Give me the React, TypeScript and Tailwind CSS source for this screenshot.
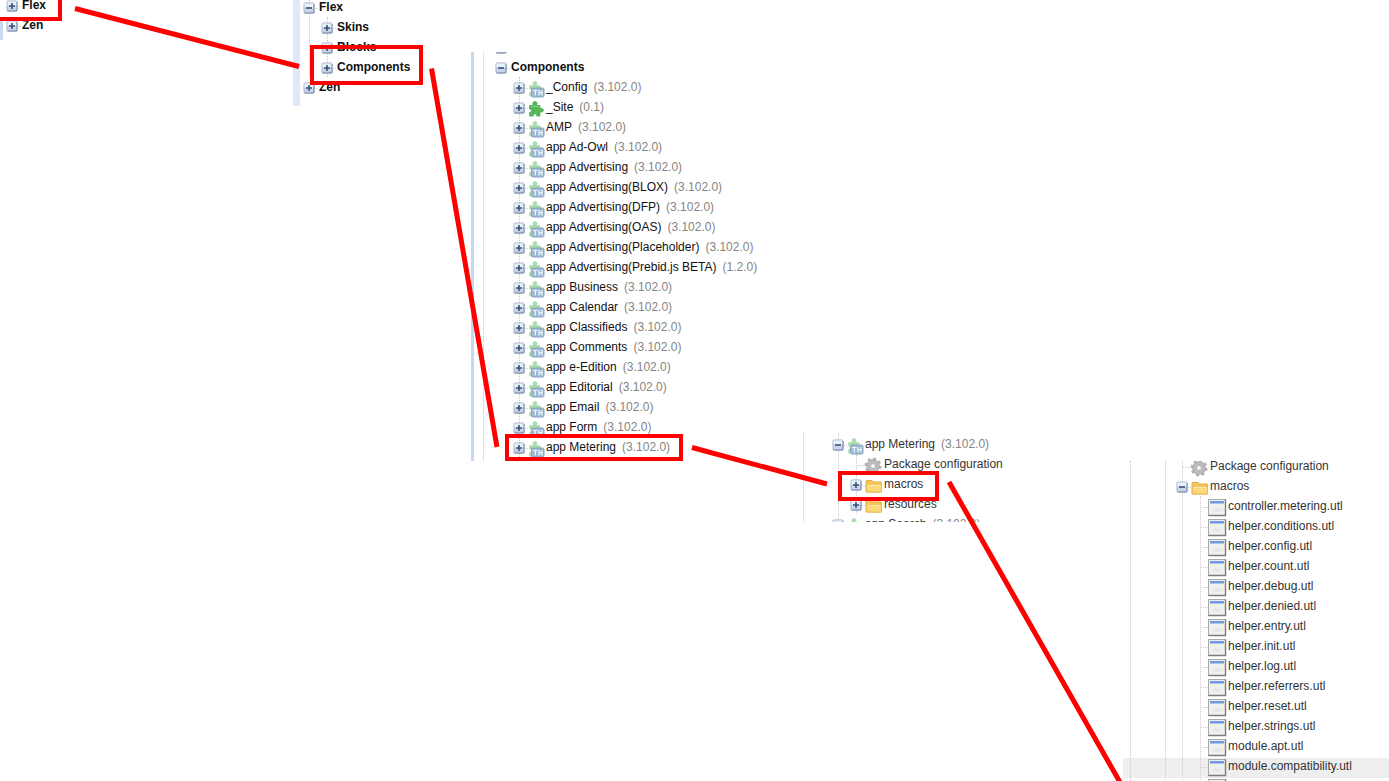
import React from "react";
import type { ReactNode } from "react";

type Kind = "th" | "puzzle" | "gear" | "folder" | "file" | "none";

function Expander({ open = false, label }: { open?: boolean; label: string }) {
  return (
    <button type="button" aria-expanded={open} aria-label={`Toggle ${label}`} className="z-10 mt-[5px] h-3 w-3 shrink-0">
      <svg viewBox="0 0 12 12" className="block h-3 w-3">
        <rect x="1" y="1" width="10" height="10" rx="1" fill="#c9d6e7" stroke="#a3b2cb" />
        <path d="M1.500 1.500h9v4h-9z" fill="#eaf0f8" />
        <path d="M1.500 11h9.500V2" stroke="#7d8fb0" fill="none" />
        <path d={open ? "M3 6h6" : "M3 6h6M6 3v6"} stroke="#3a4f78" strokeWidth="1.6" />
      </svg>
    </button>
  );
}

const PUZZLE =
  "M1.500 4.500H5.500C4.200 2.300 5 .6 7 .6s2.800 1.700 1.500 3.900H12V8c1.800-1.100 3.400-.6 3.400 1.200s-1.600 2.300-3.400 1.200V15H8.600c.5-1.500-.3-2.200-1.600-2.200s-2.100.7-1.600 2.200H1.500v-3.400c1.300-.2 1.900-.9 1.900-1.900S2.800 8 1.500 7.800z";

function Icon({ kind }: { kind: Kind }) {
  if (kind === "none") return null;
  if (kind === "th")
    return (
      <svg viewBox="0 0 17 17" className="mt-1 h-[17px] w-[17px] shrink-0" aria-hidden="true">
        <path d={PUZZLE} fill="#a8dcaa" stroke="#b5e0b6" strokeWidth=".8" />
        <rect x="3.500" y="7" width="12.500" height="9" rx="1.500" fill="#9db9d4" stroke="#86a5c4" />
        <path d="M5 9.500h4.500M7.300 9.500v5M11 9v5.500M14 9v5.500M11 11.700h3" stroke="#f0f6fb" strokeWidth="1.200" fill="none" />
      </svg>
    );
  if (kind === "puzzle")
    return (
      <svg viewBox="0 0 17 17" className="mt-1 h-[17px] w-[17px] shrink-0" aria-hidden="true">
        <path d={PUZZLE} fill="#56b858" stroke="#4bab50" strokeWidth=".8" />
        <path d="M2.500 5.500h9" stroke="#7fd07f" />
      </svg>
    );
  if (kind === "gear")
    return (
      <svg viewBox="0 0 18 18" className="mt-[3px] h-[18px] w-[18px] shrink-0" aria-hidden="true">
        <circle cx="9" cy="9" r="7.300" fill="none" stroke="#b0b0b0" strokeWidth="2.400" strokeDasharray="2.900 2.833" />
        <circle cx="9" cy="9" r="4.800" fill="none" stroke="#bcbcbc" strokeWidth="4" />
        <circle cx="9" cy="9" r="6.300" fill="none" stroke="#a5a5a5" strokeWidth=".6" />
        <circle cx="9" cy="9" r="2.500" fill="#f8f8f8" stroke="#999" strokeWidth=".8" />
      </svg>
    );
  if (kind === "folder")
    return (
      <svg viewBox="0 0 18 16" className="mt-1 h-4 w-[18px] shrink-0" aria-hidden="true">
        <path d="M1 3.500q0-1 1-1h5l1.500 1.500H15.500q1 0 1 1v9H1z" fill="#f3c65a" stroke="#e3ab3c" />
        <path d="M1.500 6.500h15v6.500q0 1-1 1H2.500q-1 0-1-1z" fill="#fcd97b" stroke="#ecbb53" />
        <path d="M2.500 7.300h13" stroke="#ffedb0" />
      </svg>
    );
  return (
    <svg viewBox="0 0 19 18" className="mt-[3px] h-[18px] w-[19px] shrink-0" aria-hidden="true">
      <rect x="0.500" y="0.500" width="17" height="16" fill="#f0f0f0" stroke="#a9a9a9" />
      <path d="M17.500 .5v16H.5" fill="none" stroke="#7c7c7c" strokeWidth="1.400" />
      <path d="M2 2h14v2.500H2z" fill="#6e98e2" />
      <path d="M5 12l2-3 3 1 2-2 1 3-3 2z" fill="#e4e4e4" />
    </svg>
  );
}

function Row({
  label,
  version,
  kind = "none",
  open,
  leaf = false,
  bold = false,
}: {
  label: string;
  version?: string;
  kind?: Kind;
  open?: boolean;
  leaf?: boolean;
  bold?: boolean;
}) {
  return (
    <div className="flex h-5 whitespace-nowrap leading-5">
      {leaf ? (
        <span className="mt-[11px] w-2 shrink-0 border-t border-dotted border-[#d0d0d0]" />
      ) : (
        <>
          <Expander open={open} label={label} />
          <span className="mt-[11px] w-[3px] shrink-0 border-t border-dotted border-[#d0d0d0]" />
        </>
      )}
      <Icon kind={kind} />
      <span className={bold ? "ml-px font-bold" : kind === "gear" ? "ml-0.5" : kind === "folder" || kind === "file" ? "ml-px" : "ml-px"}>{label}</span>
      {version && <span className="ml-1.5 text-[#858585]">({version})</span>}
    </div>
  );
}

function Branch({ children }: { children: ReactNode }) {
  return (
    <div className="ml-6 border-l border-dotted border-[#c8c8c8]">
      <div className="-ml-[7px]">{children}</div>
    </div>
  );
}

const components: [string, string][] = [
  ["_Config", "3.102.0"],
  ["_Site", "0.1"],
  ["AMP", "3.102.0"],
  ["app Ad-Owl", "3.102.0"],
  ["app Advertising", "3.102.0"],
  ["app Advertising(BLOX)", "3.102.0"],
  ["app Advertising(DFP)", "3.102.0"],
  ["app Advertising(OAS)", "3.102.0"],
  ["app Advertising(Placeholder)", "3.102.0"],
  ["app Advertising(Prebid.js BETA)", "1.2.0"],
  ["app Business", "3.102.0"],
  ["app Calendar", "3.102.0"],
  ["app Classifieds", "3.102.0"],
  ["app Comments", "3.102.0"],
  ["app e-Edition", "3.102.0"],
  ["app Editorial", "3.102.0"],
  ["app Email", "3.102.0"],
  ["app Form", "3.102.0"],
  ["app Metering", "3.102.0"],
];

const files = [
  "controller.metering.utl",
  "helper.conditions.utl",
  "helper.config.utl",
  "helper.count.utl",
  "helper.debug.utl",
  "helper.denied.utl",
  "helper.entry.utl",
  "helper.init.utl",
  "helper.log.utl",
  "helper.referrers.utl",
  "helper.reset.utl",
  "helper.strings.utl",
  "module.apt.utl",
  "module.compatibility.utl",
  "module.config.utl",
];

export default function App() {
  return (
    <main className="relative h-screen overflow-hidden bg-white font-['Liberation_Sans',Arial,sans-serif] text-[12px] text-[#111]">
      <section aria-label="Themes" className="absolute left-0 top-0 flex h-10 overflow-hidden">
        <div className="mt-5 w-[3px] bg-[#c8d9f3]" />
        <div className="-mt-[5px] ml-[3px]">
          <Row label="Flex" bold />
          <Row label="Zen" bold />
        </div>
      </section>

      <section aria-label="Flex" className="absolute left-[293px] top-0 flex h-[106px] overflow-hidden">
        <div className="w-[7px] bg-[#dfe8f8]" />
        <div className="-mt-[3px]">
          <div className="ml-[9px] border-l border-dotted border-[#c8c8c8]">
            <div className="-ml-[7px]">
              <Row label="Flex" open bold />
              <Branch>
                <Row label="Skins" bold />
                <Row label="Blocks" bold />
                <Row label="Components" bold />
              </Branch>
            </div>
          </div>
          <div className="ml-[3px]">
            <Row label="Zen" bold />
          </div>
        </div>
      </section>

      <section aria-label="Components" className="absolute left-[471px] top-[52px] flex h-[409px] overflow-hidden">
        <div className="w-[3px] bg-[#c5d7f3]" />
        <div className="ml-[9px] border-l border-dotted border-[#c8c8c8]">
          <div className="-mt-[15px] ml-[11px]">
            <Row label="" />
            <Row label="Components" open bold />
            <Branch>
              {components.map(([label, version]) => (
                <Row key={label} label={label} version={version} kind={label === "_Site" ? "puzzle" : "th"} />
              ))}
            </Branch>
          </div>
        </div>
      </section>

      <section aria-label="Metering package" className="absolute left-[803px] top-[433px] flex h-[89px] overflow-hidden text-[#333]">
        <div className="border-l border-dotted border-[#c8c8c8] pl-[34px]">
          <div className="border-l border-dotted border-[#c8c8c8]">
            <div className="-ml-[7px] -mt-[19px]">
              <div className="pl-[18px]">
                <Row label="" />
              </div>
              <Row label="app Metering" version="3.102.0" kind="th" open />
              <Branch>
                <div className="pl-1.5">
                  <Row label="Package configuration" kind="gear" leaf />
                </div>
                <Row label="macros" kind="folder" />
                <Row label="resources" kind="folder" />
              </Branch>
              <Row label="app Search" version="3.102.0" kind="th" />
            </div>
          </div>
        </div>
      </section>

      <section aria-label="Macros" className="absolute bottom-0 left-[1123px] right-0 top-[461px] flex overflow-hidden text-[#333]">
        <div className="absolute left-0 right-0 top-[297px] h-5 bg-[#eee]" />
        <div className="z-10 ml-[7px] border-l border-dotted border-[#c8c8c8] pl-[34px]">
          <div className="border-l border-dotted border-[#c8c8c8] pl-4">
            <div className="border-l border-dotted border-[#c8c8c8]">
              <div className="-ml-[7px] -mt-[5px]">
                <div className="pl-1.5">
                  <Row label="Package configuration" kind="gear" leaf />
                </div>
                <Row label="macros" kind="folder" open />
                <Branch>
                  <div className="pl-1.5">
                    {files.map((file) => (
                      <Row key={file} label={file} kind="file" leaf />
                    ))}
                  </div>
                </Branch>
              </div>
            </div>
          </div>
        </div>
      </section>

      <div className="absolute -left-1 -top-2 z-20 h-[29px] w-[66px] border-4 border-[#f00]" />
      <div className="absolute left-[310px] top-[45px] z-20 h-10 w-[113px] border-4 border-[#f00]" />
      <div className="absolute left-[505px] top-[434px] z-20 h-[27px] w-[178px] border-4 border-[#f00]" />
      <div className="absolute left-[838px] top-[471px] z-20 h-[30px] w-[101px] border-4 border-[#f00]" />
      <svg className="pointer-events-none absolute left-0 top-0 z-20 h-[781px] w-[1389px]" aria-hidden="true">
        <path d="M75 8.500L299 66.500M431.500 68.500L497 447M692 447.500L827 484M949 482L1121 784" fill="none" stroke="#f00" strokeWidth="5" />
      </svg>
    </main>
  );
}
